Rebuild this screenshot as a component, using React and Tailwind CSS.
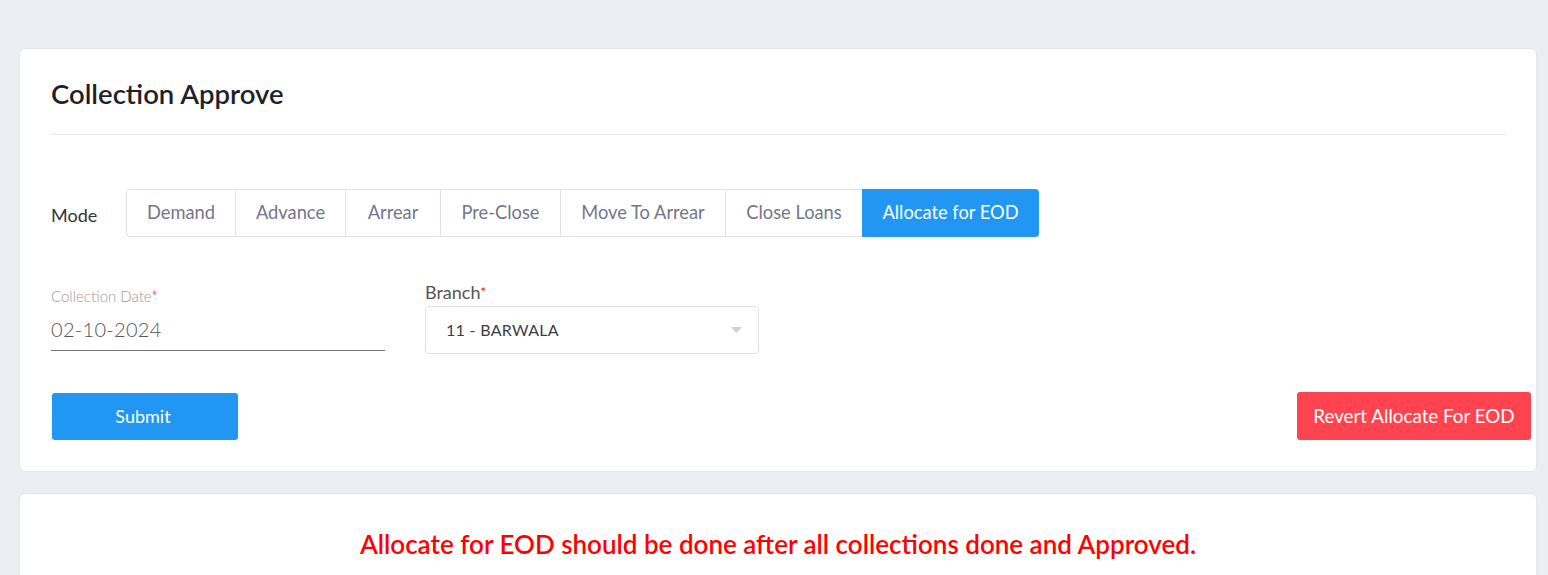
import React from "react";

const tabs = [
  { label: "Demand", w: 108 },
  { label: "Advance", w: 110 },
  { label: "Arrear", w: 95 },
  { label: "Pre-Close", w: 120 },
  { label: "Move To Arrear", w: 165 },
  { label: "Close Loans", w: 137 },
];

export default function App() {
  return (
    <div
      className="h-[575px] bg-[#ebeef3] pt-[48px] pl-[19px] pr-[11px] overflow-hidden"
      style={{ fontFamily: "Lato, 'Open Sans', sans-serif" }}
    >
      <div className="bg-white rounded-[6px] border border-[#e2e5ec] pl-[31px] pr-[30px] pt-[29px] pb-[31px]">
        <h1 className="text-[27.5px] leading-[32px] font-semibold text-[#1f1f2e]">Collection Approve</h1>
        <div className="mt-[24px] h-px bg-[#e3e5ea]" />

        <div className="mt-[54px] flex items-center">
          <span className="w-[75px] text-[18px] text-[#333340] pt-[4px]">Mode</span>
          <div className="flex h-[48px] rounded-[4px] border border-[#dfe2ea]">
            {tabs.map((t, i) => (
              <div
                key={t.label}
                className={`flex items-center justify-center text-[18.3px] text-[#74768a] ${i > 0 ? "border-l border-[#dfe2ea]" : ""}`}
                style={{ width: t.w }}
              >
                {t.label}
              </div>
            ))}
            <div className="-my-px -mr-px flex w-[177px] items-center justify-center rounded-r-[4px] bg-[#2196f3] text-[18.3px] text-white">
              Allocate for EOD
            </div>
          </div>
        </div>

        <div className="mt-[46px] flex gap-[40px]">
          <div className="w-[334px]">
            <div className="text-[15px] leading-[16px] font-light text-[#9a9a9a] pt-[5px]">
              Collection Date<span className="text-[#ff0000]">*</span>
            </div>
            <div className="mt-[13px] h-[34px] border-b border-[#777] text-[20px] font-light leading-[24px] text-[#555] tracking-[0.3px]">
              02-10-2024
            </div>
          </div>
          <div className="w-[334px]">
            <div className="text-[18px] leading-[19px] text-[#555]">
              Branch<span className="text-[#ff0000] text-[13px] align-top">*</span>
            </div>
            <div className="mt-[4px] flex h-[48px] items-center justify-between rounded-[4px] border border-[#e0e2ea] pl-[20px] pr-[16px]">
              <span className="text-[16px] text-[#3d3d4d] tracking-[0.3px]">11 - BARWALA</span>
              <svg width="11" height="6" viewBox="0 0 11 6">
                <path d="M0 0 L11 0 L5.5 6 Z" fill="#cdd0d8" />
              </svg>
            </div>
          </div>
        </div>

        <div className="mt-[38px] -mr-[25px] flex justify-between items-start">
          <button className="ml-px mt-px h-[47px] w-[186px] rounded-[3px] bg-[#2196f3] text-[18px] text-white pr-[4px]">
            Submit
          </button>
          <button className="h-[48px] w-[234px] rounded-[3px] bg-[#ff444f] text-[18.8px] text-white">
            Revert Allocate For EOD
          </button>
        </div>
      </div>

      <div className="mt-[21px] h-[120px] bg-white rounded-[6px] border border-[#e2e5ec] pt-[31px] text-center">
        <p className="text-[26px] font-semibold text-[#ff0000]">
          Allocate for EOD should be done after all collections done and Approved.
        </p>
      </div>
    </div>
  );
}
